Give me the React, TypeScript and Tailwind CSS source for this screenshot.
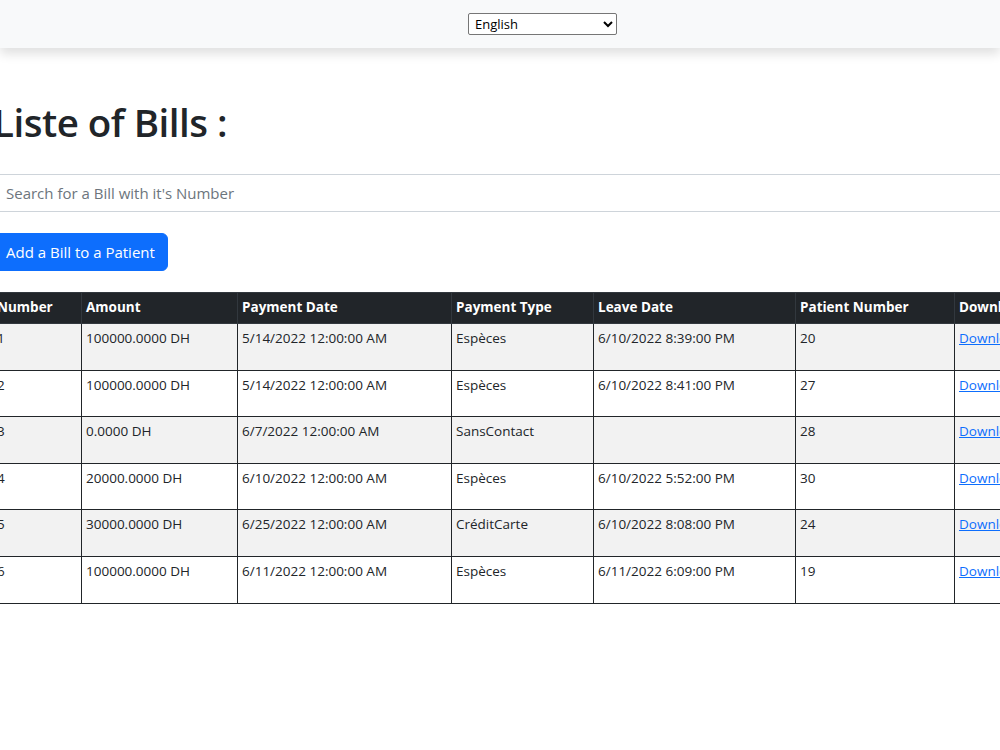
import React from "react";

// Bills list page — clipped view of a wide bootstrap-like table
type Bill = {
  id: number;
  amount: string;
  paymentDate: string;
  paymentType: string;
  leaveDate: string;
  patient: number;
};

const bills: Bill[] = [
  { id: 1, amount: "100000.0000 DH", paymentDate: "5/14/2022 12:00:00 AM", paymentType: "Espèces", leaveDate: "6/10/2022 8:39:00 PM", patient: 20 },
  { id: 2, amount: "100000.0000 DH", paymentDate: "5/14/2022 12:00:00 AM", paymentType: "Espèces", leaveDate: "6/10/2022 8:41:00 PM", patient: 27 },
  { id: 3, amount: "0.0000 DH", paymentDate: "6/7/2022 12:00:00 AM", paymentType: "SansContact", leaveDate: "", patient: 28 },
  { id: 4, amount: "20000.0000 DH", paymentDate: "6/10/2022 12:00:00 AM", paymentType: "Espèces", leaveDate: "6/10/2022 5:52:00 PM", patient: 30 },
  { id: 5, amount: "30000.0000 DH", paymentDate: "6/25/2022 12:00:00 AM", paymentType: "CréditCarte", leaveDate: "6/10/2022 8:08:00 PM", patient: 24 },
  { id: 6, amount: "100000.0000 DH", paymentDate: "6/11/2022 12:00:00 AM", paymentType: "Espèces", leaveDate: "6/11/2022 6:09:00 PM", patient: 19 },
];

const th = "border border-[#32383e] px-[4px] py-[4px] text-left font-bold align-top";
const td = "border border-[#212529] px-[4px] py-[4px] align-top";

const App: React.FC = () => {
  return (
    <div className="min-h-[750px] bg-white text-[#212529] font-['Open_Sans',sans-serif] overflow-hidden">
      {/* Top bar with language picker (page is wider than the window) */}
      <header className="h-[48px] bg-[#f8f9fa] flex items-center justify-center pl-[85px] shadow-[0_6px_10px_rgba(0,0,0,0.12)]">
        <select
          defaultValue="en"
          className="w-[149px] h-[22px] border border-[#767676] rounded-[2px] bg-white text-[13px] text-black pl-[2px] font-['Open_Sans',sans-serif]"
        >
          <option value="en">English</option>
          <option value="fr">Français</option>
        </select>
      </header>

      {/* Main content, scrolled a little to the left */}
      <main className="-ml-[7px] w-[1200px] pt-[50px]">
        <h1 className="text-[38.5px] leading-[48px] font-semibold tracking-[-0.5px] mb-[28px]">Liste of Bills :</h1>

        <input
          type="text"
          placeholder="Search for a Bill with it's Number"
          className="block w-full h-[38px] border border-[#ced4da] px-[12px] text-[15px] placeholder:text-[#6c757d] outline-none"
        />

        <button className="mt-[21px] h-[38px] px-[12px] rounded-[6px] bg-[#0d6efd] text-white text-[15px] border border-[#0d6efd]">
          Add a Bill to a Patient
        </button>

        <table className="mt-[21px] ml-[-1px] border-collapse text-[13.5px] leading-[21px]">
          <thead className="bg-[#212529] text-white">
            <tr className="h-[31px]">
              <th className={`${th} w-[89px]`}>Number</th>
              <th className={`${th} w-[156px]`}>Amount</th>
              <th className={`${th} w-[214px]`}>Payment Date</th>
              <th className={`${th} w-[142px]`}>Payment Type</th>
              <th className={`${th} w-[202px]`}>Leave Date</th>
              <th className={`${th} w-[159px]`}>Patient Number</th>
              <th className={`${th} w-[160px]`}>Download</th>
            </tr>
          </thead>
          <tbody>
            {bills.map((b, i) => (
              <tr key={b.id} className={i % 2 === 0 ? "h-[46.6px] bg-[#f2f2f2]" : "h-[46.6px] bg-white"}>
                <td className={td}>{b.id}</td>
                <td className={td}>{b.amount}</td>
                <td className={td}>{b.paymentDate}</td>
                <td className={td}>{b.paymentType}</td>
                <td className={td}>{b.leaveDate}</td>
                <td className={td}>{b.patient}</td>
                <td className={td}>
                  <a href="#" className="text-[#0d6efd] underline">Download</a>
                </td>
              </tr>
            ))}
          </tbody>
        </table>
      </main>
    </div>
  );
};

export default App;
